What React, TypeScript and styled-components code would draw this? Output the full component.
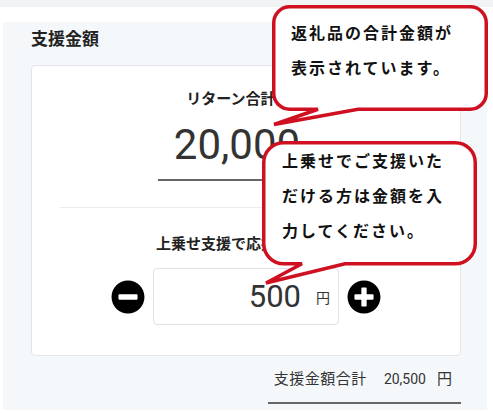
import styled, { createGlobalStyle } from "styled-components";
import { FaMinusCircle, FaPlusCircle } from "react-icons/fa";

const GlobalStyle = createGlobalStyle`
  html, body {
    margin: 0;
    padding: 0;
    background: #fff;
  }
  body {
    font-family: "Noto Sans CJK JP", "Noto Sans", sans-serif;
    color: #222;
  }
`;

type Point = [number, number];

type BubbleProps = {
  x: number;
  y: number;
  w: number;
  h: number;
  r: number;
  // 尻尾: 右の付け根, 先端, 左の付け根 (bubble 内座標)
  tail: [Point, Point, Point];
  padTop: number;
  padLeft: number;
  lines: string[];
};

function bubblePath(w: number, h: number, r: number, tail: [Point, Point, Point]) {
  const s = 1.75;
  const L = s, T = s, R = w - s, B = h - s;
  const [br, tip, bl] = tail;
  return [
    `M ${L + r} ${T}`,
    `H ${R - r}`,
    `A ${r} ${r} 0 0 1 ${R} ${T + r}`,
    `V ${B - r}`,
    `A ${r} ${r} 0 0 1 ${R - r} ${B}`,
    `H ${br[0]}`,
    `L ${tip[0]} ${tip[1]}`,
    `L ${bl[0]} ${B}`,
    `H ${L + r}`,
    `A ${r} ${r} 0 0 1 ${L} ${B - r}`,
    `V ${T + r}`,
    `A ${r} ${r} 0 0 1 ${L + r} ${T}`,
    "Z",
  ].join(" ");
}

function Bubble({ x, y, w, h, r, tail, padTop, padLeft, lines }: BubbleProps) {
  return (
    <BubbleBox $x={x} $y={y} $w={w} $h={h} $padTop={padTop} $padLeft={padLeft}>
      <BubbleShape width={w} height={h} viewBox={`0 0 ${w} ${h}`}>
        <path
          d={bubblePath(w, h, r, tail)}
          fill="#fff"
          stroke="#cf1020"
          strokeWidth={3.5}
          strokeLinejoin="miter"
        />
      </BubbleShape>
      <BubbleText>
        {lines.map((l) => (
          <div key={l}>{l}</div>
        ))}
      </BubbleText>
    </BubbleBox>
  );
}

export default function App() {
  return (
    <Page>
      <GlobalStyle />
      <TopBand />
      <Section>
        <Title>支援金額</Title>
        <Card>
          <Label>リターン合計金額</Label>
          <AmountField>
            <BigValue>20,000</BigValue>
            <Unit>円</Unit>
          </AmountField>
          <Divider />
          <Label $top={25}>上乗せ支援で応援する金額</Label>
          <Stepper>
            <IconButton aria-label="減らす">
              <FaMinusCircle />
            </IconButton>
            <InputBox>
              <InputValue>500</InputValue>
              <Unit>円</Unit>
            </InputBox>
            <IconButton aria-label="増やす">
              <FaPlusCircle />
            </IconButton>
          </Stepper>
        </Card>
        <Summary>
          <SumLabel>支援金額合計</SumLabel>
          <SumValue>20,500</SumValue>
          <SumUnit>円</SumUnit>
        </Summary>
      </Section>

      <Bubble
        x={272}
        y={4.5}
        w={216}
        h={106}
        r={16}
        tail={[[86, 104.25], [2, 119.5], [46, 104.25]]}
        padTop={10}
        padLeft={19}
        lines={["返礼品の合計金額が", "表示されています。"]}
      />
      <Bubble
        x={262}
        y={141}
        w={215}
        h={124.5}
        r={20}
        tail={[[83, 122.75], [4, 142], [40, 122.75]]}
        padTop={2}
        padLeft={20}
        lines={["上乗せでご支援いた", "だける方は金額を入", "力してください。"]}
      />
    </Page>
  );
}

const Page = styled.div`
  position: relative;
  width: 493px;
  height: 413px;
  overflow: hidden;
`;

const TopBand = styled.div`
  height: 7px;
  background: #f2f3f5;
`;

const Section = styled.section`
  display: flex;
  flex-direction: column;
  margin: 15px 6px 0 3px;
  padding: 4px 26px 6px 28px;
  background: #f5f8fb;
`;

const Title = styled.h2`
  margin: 0;
  font-size: 17px;
  font-weight: 700;
  line-height: 24px;
  color: #222;
`;

const Card = styled.div`
  display: flex;
  flex-direction: column;
  align-items: center;
  margin-top: 15px;
  padding: 22px 28px 30px;
  background: #fff;
  border: 1px solid #e2e5e9;
  border-radius: 4px;
`;

const Label = styled.div<{ $top?: number }>`
  margin-top: ${({ $top }) => $top ?? 0}px;
  font-size: 15px;
  font-weight: 600;
  line-height: 20px;
  color: #222;
`;

const AmountField = styled.div`
  display: flex;
  justify-content: center;
  align-items: baseline;
  gap: 4px;
  width: 176px;
  margin-top: 2px;
  padding: 11px 0 10px;
  border-bottom: 2px solid #666;
`;

const BigValue = styled.span`
  font-family: Roboto, "Noto Sans", sans-serif;
  font-size: 42px;
  font-weight: 400;
  line-height: 48px;
  color: #333;
`;

const Unit = styled.span`
  font-size: 14px;
  color: #333;
`;

const Divider = styled.div`
  align-self: stretch;
  height: 1px;
  margin-top: 26px;
  background: #ececec;
`;

const Stepper = styled.div`
  display: flex;
  align-items: center;
  gap: 8px;
  margin-top: 15px;
`;

const IconButton = styled.button`
  display: flex;
  align-items: center;
  justify-content: center;
  width: 34px;
  height: 34px;
  padding: 0;
  border: none;
  background: none;
  color: #000;
  font-size: 34px;
  cursor: pointer;
`;

const InputBox = styled.div`
  display: flex;
  align-items: center;
  justify-content: flex-end;
  gap: 15px;
  width: 186px;
  height: 57px;
  padding-right: 8px;
  box-sizing: border-box;
  border: 1px solid #dfe2e6;
  border-radius: 4px;
`;

const InputValue = styled.span`
  font-family: Roboto, "Noto Sans", sans-serif;
  font-size: 31px;
  line-height: 40px;
  color: #333;
`;

const Summary = styled.div`
  display: flex;
  align-items: baseline;
  justify-content: flex-end;
  align-self: flex-end;
  width: 193px;
  margin-top: 11px;
  padding: 0 9px 12px 0;
  box-sizing: border-box;
  border-bottom: 2px solid #666;
  line-height: 22px;
  color: #333;
`;

const SumLabel = styled.span`
  font-size: 15px;
  letter-spacing: 0.5px;
`;

const SumValue = styled.span`
  margin-left: 17px;
  font-family: Roboto, "Noto Sans", sans-serif;
  font-size: 14px;
`;

const SumUnit = styled.span`
  margin-left: 11px;
  font-size: 15px;
`;

const BubbleBox = styled.div<{
  $x: number;
  $y: number;
  $w: number;
  $h: number;
  $padTop: number;
  $padLeft: number;
}>`
  position: absolute;
  left: ${({ $x }) => $x}px;
  top: ${({ $y }) => $y}px;
  width: ${({ $w }) => $w}px;
  height: ${({ $h }) => $h}px;
  padding: ${({ $padTop }) => $padTop}px 0 0 ${({ $padLeft }) => $padLeft}px;
  box-sizing: border-box;
`;

const BubbleShape = styled.svg`
  position: absolute;
  left: 0;
  top: 0;
  overflow: visible;
`;

const BubbleText = styled.div`
  position: relative;
  font-size: 16px;
  font-weight: 600;
  letter-spacing: 2px;
  line-height: 35px;
  color: #111;
  white-space: nowrap;
`;
